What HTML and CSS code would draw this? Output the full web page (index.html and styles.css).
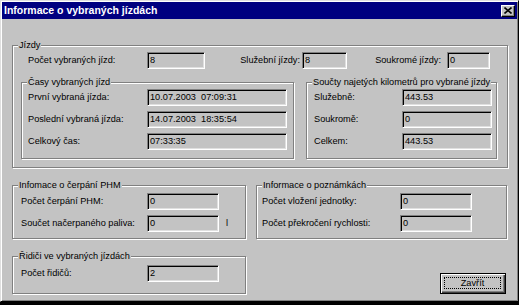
FILE: index.html
```html
<!DOCTYPE html>
<html lang="cs">
<head>
    <meta charset="UTF-8">
    <meta name="viewport" content="width=device-width, initial-scale=1.0">
    <title>Informace o vybraných jízdách</title>
    <link rel="stylesheet" href="styles.css">
</head>
<body>
    <div class="window">
        <div class="titlebar">
            <span class="title">Informace o vybraných jízdách</span>
            <span class="close-btn">
                <svg width="8" height="7" viewBox="0 0 8 7">
                    <path d="M0.5 0.5 L7.5 6.5 M7.5 0.5 L0.5 6.5" stroke="#000" stroke-width="1.6" fill="none"/>
                </svg>
            </span>
        </div>

        <div class="client">
            <fieldset class="group">
                <legend>Jízdy</legend>
                <div class="rides-summary">
                    <span class="lbl">Počet vybraných jízd:</span>
                    <div class="field">8</div>
                    <span class="lbl lbl-right lbl-business">Služební jízdy:</span>
                    <div class="field">8</div>
                    <span class="lbl lbl-right lbl-private">Soukromé jízdy:</span>
                    <div class="field">0</div>
                </div>

                <div class="rides-details">
                    <fieldset class="group group-times">
                        <legend>Časy vybraných jízd</legend>
                        <div class="rows">
                            <div class="form-row">
                                <span class="lbl">První vybraná jízda:</span>
                                <div class="field">10.07.2003&nbsp; 07:09:31</div>
                            </div>
                            <div class="form-row">
                                <span class="lbl">Poslední vybraná jízda:</span>
                                <div class="field">14.07.2003&nbsp; 18:35:54</div>
                            </div>
                            <div class="form-row">
                                <span class="lbl">Celkový čas:</span>
                                <div class="field">07:33:35</div>
                            </div>
                        </div>
                    </fieldset>

                    <fieldset class="group group-km">
                        <legend>Součty najetých kilometrů pro vybrané jízdy</legend>
                        <div class="rows">
                            <div class="form-row">
                                <span class="lbl">Služebně:</span>
                                <div class="field">443.53</div>
                            </div>
                            <div class="form-row">
                                <span class="lbl">Soukromě:</span>
                                <div class="field">0</div>
                            </div>
                            <div class="form-row">
                                <span class="lbl">Celkem:</span>
                                <div class="field">443.53</div>
                            </div>
                        </div>
                    </fieldset>
                </div>
            </fieldset>

            <div class="lower">
                <div class="col-left">
                    <fieldset class="group group-fuel">
                        <legend>Infomace o čerpání PHM</legend>
                        <div class="rows">
                            <div class="form-row">
                                <span class="lbl">Počet čerpání PHM:</span>
                                <div class="field">0</div>
                            </div>
                            <div class="form-row">
                                <span class="lbl">Součet načerpaného paliva:</span>
                                <div class="field">0</div>
                                <span class="unit">l</span>
                            </div>
                        </div>
                    </fieldset>

                    <fieldset class="group group-drivers">
                        <legend>Řidiči ve vybraných jízdách</legend>
                        <div class="rows">
                            <div class="form-row">
                                <span class="lbl">Počet řidičů:</span>
                                <div class="field">2</div>
                            </div>
                        </div>
                    </fieldset>
                </div>

                <div class="col-right">
                    <fieldset class="group group-notes">
                        <legend>Informace o poznámkách</legend>
                        <div class="rows">
                            <div class="form-row">
                                <span class="lbl">Počet vložení jednotky:</span>
                                <div class="field">0</div>
                            </div>
                            <div class="form-row">
                                <span class="lbl">Počet překročení rychlosti:</span>
                                <div class="field">0</div>
                            </div>
                        </div>
                    </fieldset>

                    <button class="btn" type="button"><span class="btn-focus">Zavřít</span></button>
                </div>
            </div>
        </div>
    </div>
</body>
</html>
```

FILE: styles.css
```css
body {
    margin: 0;
    background-color: #000;
    font-family: "Liberation Sans", Arial, sans-serif;
    font-size: 9.2px;
    line-height: 11px;
    color: #000;
}
.window {
    box-sizing: border-box;
    width: 519px;
    height: 302px;
    background-color: #c3c3c3;
    border: 1px solid;
    border-color: #dfdfdf #000 #000 #dfdfdf;
    box-shadow: inset 1px 1px 0 #fff, inset -1px -1px 0 #808080;
    padding: 1px;
}
.titlebar {
    display: flex;
    align-items: center;
    justify-content: space-between;
    height: 17px;
    padding: 0 2px;
    background-color: #000080;
}
.title {
    color: #fff;
    font-weight: bold;
    font-size: 10.5px;
}
.close-btn {
    display: flex;
    align-items: center;
    justify-content: center;
    box-sizing: border-box;
    width: 14px;
    height: 12px;
    background-color: #c3c3c3;
    border: 1px solid;
    border-color: #fff #000 #000 #fff;
    box-shadow: inset -1px -1px 0 #808080;
}
.client {
    padding: 21px 9px 0 10px;
}

/* etched group box */
.group {
    margin: 0;
    padding: 0;
    min-width: 0;
    border: 1px solid #808080;
    box-shadow: inset 1px 1px 0 #fff, 1px 1px 0 #fff;
}
.group legend {
    margin-left: 5px;
    padding: 0 1px;
    background-color: #c3c3c3;
}
.lbl {
    white-space: nowrap;
}
.field {
    box-sizing: border-box;
    height: 17px;
    padding-left: 2px;
    line-height: 15px;
    border: 1px solid;
    border-color: #808080 #fff #fff #808080;
    box-shadow: inset 1px 1px 0 #000, inset -1px -1px 0 #dfdfdf;
    white-space: nowrap;
}

.rides-summary {
    display: grid;
    grid-template-columns: 119px 58px 97px 45px 100px 43px;
    align-items: center;
    margin-top: 1px;
    padding-left: 15px;
}
.lbl-right {
    text-align: right;
}
.lbl-business {
    padding-right: 2px;
}
.lbl-private {
    padding-right: 6px;
}
.rides-details {
    display: flex;
    margin-top: 8px;
    padding: 0 0 8px 8px;
}
.rows {
    display: flex;
    flex-direction: column;
    gap: 5px;
    margin-top: 1px;
}
.form-row {
    display: flex;
    align-items: center;
}

.group-times {
    width: 271px;
}
.group-times .rows {
    padding: 0 0 8px 6px;
}
.group-times .lbl {
    width: 119px;
}
.group-times .field {
    width: 140px;
}
.group-km {
    width: 189px;
    margin-left: 12px;
}
.group-km .rows {
    padding: 0 0 8px 7px;
}
.group-km .lbl {
    width: 88px;
}
.group-km .field {
    width: 90px;
}

.lower {
    display: grid;
    grid-template-columns: 234px 251px;
    column-gap: 10px;
    margin-top: 12px;
}
.col-left {
    display: flex;
    flex-direction: column;
}
.col-right {
    display: flex;
    flex-direction: column;
}
.group-fuel .rows {
    margin-top: 2px;
    padding: 0 0 6px 8px;
}
.group-fuel .lbl, .group-drivers .lbl {
    width: 126px;
}
.group-fuel .field, .group-drivers .field {
    width: 72px;
}
.unit {
    margin-left: 7px;
}
.group-drivers {
    margin-top: 12px;
}
.group-drivers .rows {
    margin-top: 3px;
    padding: 0 0 11px 8px;
}
.group-notes .rows {
    margin-top: 2px;
    padding: 0 0 6px 5px;
}
.group-notes .lbl {
    width: 138px;
}
.group-notes .field {
    width: 72px;
}

.btn {
    align-self: flex-end;
    margin-top: auto;
    margin-right: 1px;
    box-sizing: border-box;
    width: 66px;
    height: 21px;
    padding: 0;
    font-family: inherit;
    font-size: 9.2px;
    color: #000;
    background-color: #c3c3c3;
    border: 1px solid #000;
    box-shadow: inset 1px 1px 0 #fff, inset -1px -1px 0 #404040, inset -2px -2px 0 #808080;
    display: flex;
}
.btn-focus {
    flex: 1;
    margin: 3px 4px 4px 3px;
    border: 1px dotted #000;
    line-height: 10px;
    text-align: center;
}
```
